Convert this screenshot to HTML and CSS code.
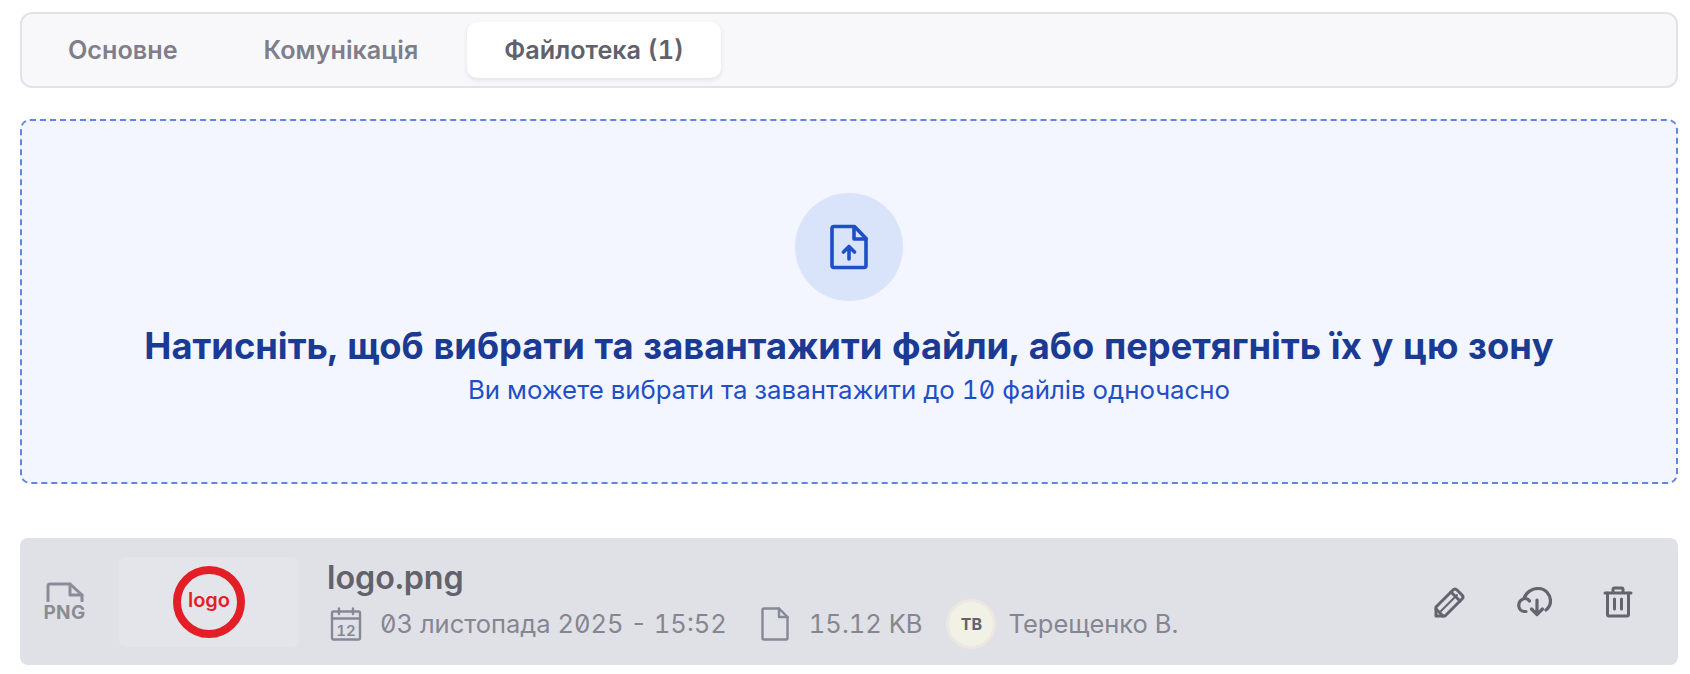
FILE: index.html
```html
<!DOCTYPE html>
<html lang="uk">
  <head>
    <meta charset="UTF-8">
    <title>Файлотека</title>
    <link rel="stylesheet" href="styles.css">
  </head>
  <body>
    <nav class="tabs">
      <a class="tab">Основне</a>
      <a class="tab">Комунікація</a>
      <a class="tab tab-active">Файлотека (1)</a>
    </nav>

    <section class="dropzone">
      <div class="drop-circle">
        <svg class="drop-icon" width="38" height="46" viewBox="0 0 38 46" fill="none" stroke="#1f4fc8" stroke-width="3.6" stroke-linejoin="round" stroke-linecap="round">
          <path d="M4 2.500H24.500L36 14.500V41.500Q36 43.500 34 43.500H4Q2 43.500 2 41.500V4.500Q2 2.500 4 2.500Z"/>
          <path d="M24 3V15H36"/>
          <path d="M19 35V23M13.500 28L19 22.500L24.500 28"/>
        </svg>
      </div>
      <h2 class="drop-title">Натисніть, щоб вибрати та завантажити файли, або перетягніть їх у цю зону</h2>
      <p class="drop-sub">Ви можете вибрати та завантажити до 10 файлів одночасно</p>
    </section>

    <div class="file-row">
      <div class="file-type">
        <svg width="38" height="20" viewBox="0 0 38 20" fill="none" stroke="#8a8c97" stroke-width="3" stroke-linecap="round" stroke-linejoin="round">
          <path d="M2 19V4Q2 2 4 2H24L36 13V19"/>
          <path d="M24 2V13H36"/>
        </svg>
        <span class="file-ext">PNG</span>
      </div>

      <div class="thumb">
        <svg width="72" height="72" viewBox="0 0 72 72">
          <circle cx="36" cy="36" r="32" fill="none" stroke="#e41e26" stroke-width="8"/>
          <text x="36" y="41" text-anchor="middle" class="logo-text">logo</text>
        </svg>
      </div>

      <div class="file-info">
        <div class="file-name">logo.png</div>
        <div class="file-meta">
          <svg class="meta-icon cal-icon" width="32" height="34" viewBox="0 0 32 34" fill="none" stroke="#858895" stroke-width="2.400" stroke-linecap="round" stroke-linejoin="round">
            <rect x="2" y="4.500" width="28" height="28" rx="1.500"/>
            <path d="M2 11.500H30M9 1.500V7M23 1.500V7"/>
            <text x="16" y="29" text-anchor="middle" class="cal-text">12</text>
          </svg>
          <span class="meta-text date">03 листопада 2025 - 15:52</span>
          <svg class="meta-icon size-icon" width="28" height="34" viewBox="0 0 28 34" fill="none" stroke="#858895" stroke-width="2.400" stroke-linecap="round" stroke-linejoin="round">
            <path d="M3 1.500H18L26.500 10V31Q26.500 32.500 25 32.500H3Q1.500 32.500 1.500 31V3Q1.500 1.500 3 1.500Z"/>
            <path d="M18 1.500V10H26.500"/>
          </svg>
          <span class="meta-text">15.12 KB</span>
          <span class="avatar">ТВ</span>
          <span class="meta-text">Терещенко В.</span>
        </div>
      </div>

      <div class="file-actions">
        <svg width="32" height="32" viewBox="0 0 32 32" fill="none" stroke="#62646e" stroke-width="3" stroke-linejoin="round" stroke-linecap="round">
          <path d="M3 21L20 4Q22 2 24 4L29 9Q31 11 29 13L12 30H3Z"/>
          <path d="M8 25L24 9" stroke-width="2"/>
          <path d="M18 6L27 15M3 23L10 30"/>
        </svg>
        <svg width="36" height="30" viewBox="0 0 36 30" fill="none" stroke="#62646e" stroke-width="3.200" stroke-linecap="round" stroke-linejoin="round">
          <path d="M10 24.500H8.500C2 24.500 0 14.500 8 11.500C10 5 16 1.500 22 1.500C30 1.500 34.500 8 34.500 14C34.500 18 32.500 21 30 23"/>
          <path d="M9 11.500C11 11.500 12.500 12.500 13.500 14"/>
          <path d="M21 13V27M15.500 22L21 27.500L26.500 22"/>
        </svg>
        <svg width="30" height="32" viewBox="0 0 30 32" fill="none" stroke="#62646e" stroke-width="3" stroke-linecap="round" stroke-linejoin="round">
          <path d="M2 7H28M10 7V3.500Q10 2 11.500 2H18.500Q20 2 20 3.500V7"/>
          <path d="M4.500 7V28.500Q4.500 30 6 30H24Q25.500 30 25.500 28.500V7"/>
          <path d="M11.500 13V23M18.500 13V23"/>
        </svg>
      </div>
    </div>
  </body>
</html>
```

FILE: styles.css
```css
body {
  margin: 0;
  padding: 12px 12px 0 20px;
  background: #fff;
  font-family: "Inter", "Noto Sans", sans-serif;
  font-feature-settings: "zero", "tnum";
}

.tabs {
  display: flex;
  gap: 14px;
  height: 76px;
  box-sizing: border-box;
  padding: 8px 10px;
  background: #f8f8fb;
  border: 2px solid #e2e2e8;
  border-radius: 12px;
}

.tab {
  display: flex;
  align-items: center;
  padding: 0 36px;
  font-size: 25.2px;
  font-weight: 600;
  color: #7e7f8a;
  border-radius: 10px;
}

.tab-active {
  padding: 0 37px;
  margin-left: -1px;
  background: #fff;
  color: #60616c;
  box-shadow: 0 2px 4px rgba(60, 60, 80, 0.12);
}

.dropzone {
  display: flex;
  flex-direction: column;
  align-items: center;
  box-sizing: border-box;
  height: 365px;
  margin-top: 31px;
  padding-top: 72px;
  background: #f3f6fe;
  border: 2px dashed #5f87e2;
  border-radius: 10px;
}

.drop-circle {
  display: flex;
  align-items: center;
  justify-content: center;
  width: 108px;
  height: 108px;
  border-radius: 50%;
  background: #d9e4fa;
}

.drop-title {
  margin: 23px 0 0;
  font-size: 36.3px;
  line-height: 44px;
  font-weight: 700;
  color: #1b3a94;
}

.drop-sub {
  margin: 6px 0 0;
  font-size: 25.8px;
  line-height: 32px;
  color: #1f4fc8;
}

.file-row {
  display: flex;
  align-items: center;
  height: 127px;
  margin-top: 54px;
  padding: 0 45px 0 25px;
  background: #e0e1e6;
  border-radius: 8px;
}

.file-type {
  display: flex;
  flex-direction: column;
  align-items: center;
  width: 39px;
  margin-top: 1px;
}

.file-ext {
  margin-top: 2px;
  font-size: 19px;
  line-height: 18px;
  font-weight: 700;
  letter-spacing: 0.4px;
  color: #8a8c97;
}

.thumb {
  display: flex;
  align-items: center;
  justify-content: center;
  width: 180px;
  height: 90px;
  margin-left: 35px;
  background: #e4e5ea;
  border-radius: 8px;
}

.logo-text {
  font-family: "Inter", sans-serif;
  font-size: 20px;
  font-weight: 600;
  fill: #e41e26;
}

.file-info {
  flex: 1;
  margin-left: 28px;
}

.file-name {
  font-size: 32.3px;
  line-height: 46px;
  font-weight: 600;
  color: #62626d;
}

.file-meta {
  display: flex;
  align-items: center;
  margin-top: -2px;
}

.cal-icon {
  margin-left: 3px;
}

.size-icon {
  margin-left: 34px;
}

.meta-text {
  margin-left: 18px;
  font-size: 25.5px;
  color: #858691;
}

.size-icon + .meta-text {
  margin-left: 20px;
}

.cal-text {
  font-family: "Inter", sans-serif;
  font-size: 15px;
  font-weight: 600;
  fill: #858895;
  stroke: none;
}

.avatar {
  display: flex;
  align-items: center;
  justify-content: center;
  box-sizing: border-box;
  width: 50px;
  height: 50px;
  margin-left: 24px;
  border: 3px solid #ece7e1;
  border-radius: 50%;
  background: #f1f1e6;
  font-size: 16px;
  font-weight: 700;
  color: #62626d;
}

.avatar + .meta-text {
  margin-left: 12px;
}

.file-actions {
  display: flex;
  align-items: center;
  gap: 51px;
}
```
